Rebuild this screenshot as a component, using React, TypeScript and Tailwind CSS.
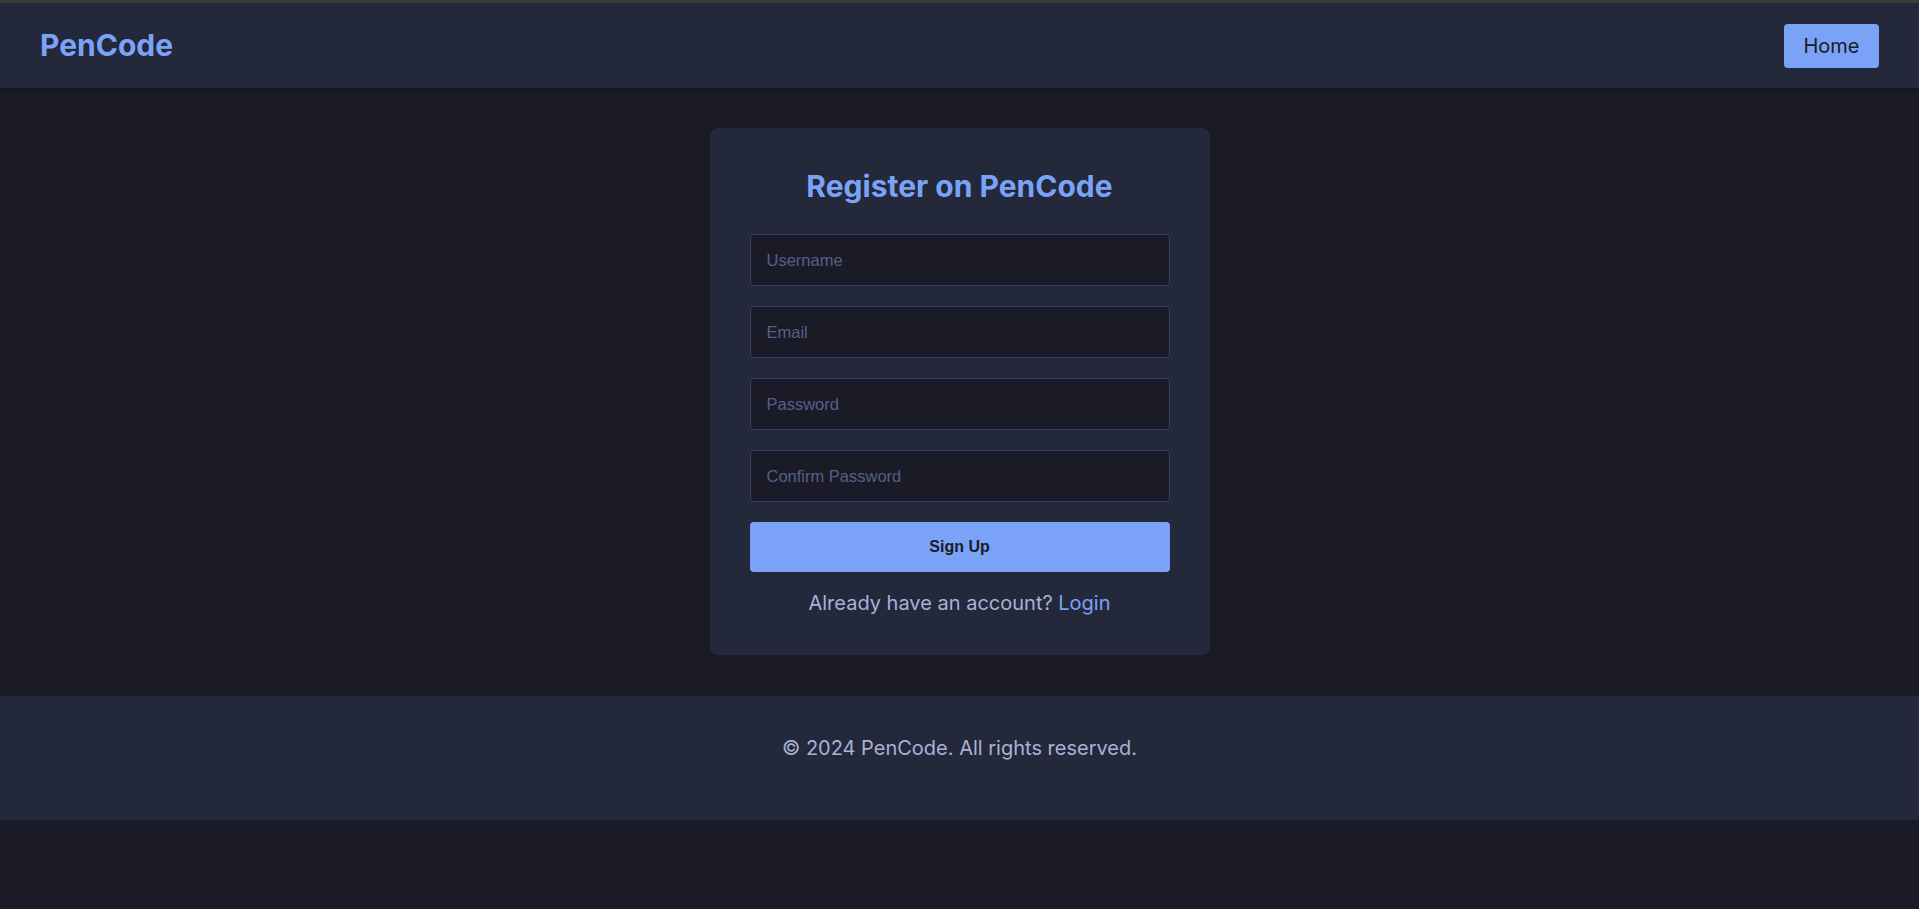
export default function App() {
  const fields = [
    { placeholder: "Username", type: "text" },
    { placeholder: "Email", type: "email" },
    { placeholder: "Password", type: "password" },
    { placeholder: "Confirm Password", type: "password" },
  ];

  return (
    <div className="min-h-[909px] bg-[#1a1b26] font-['Inter',sans-serif] text-[#a9b1d6]">
      <div className="h-[3px] bg-[#3c3c3c]" />
      <header className="flex h-[85px] items-center justify-between bg-[#24283b] px-10 shadow-[0_2px_4px_rgba(0,0,0,0.2)]">
        <h1 className="text-[30px] font-bold text-[#7aa2f7]">PenCode</h1>
        <button className="h-[44px] w-[95px] rounded bg-[#7aa2f7] text-[20px] text-[#1a1b26]">
          Home
        </button>
      </header>

      <main className="flex justify-center pt-10 pb-[41px]">
        <div className="w-[500px] rounded-lg bg-[#24283b] p-10">
          <h2 className="mb-[30px] text-center text-[30px] leading-[36px] font-bold text-[#7aa2f7]">
            Register on PenCode
          </h2>
          <form className="flex flex-col gap-5" onSubmit={(e) => e.preventDefault()}>
            {fields.map((f) => (
              <input
                key={f.placeholder}
                type={f.type}
                placeholder={f.placeholder}
                className="h-[52px] w-full rounded border border-[#3b4261] bg-[#1a1b26] px-4 font-['Liberation_Sans',Arial,sans-serif] text-[16.5px] text-[#c0caf5] placeholder:text-[#565f89] outline-none"
              />
            ))}
            <button
              type="submit"
              className="h-[50px] w-full rounded bg-[#7aa2f7] font-['Liberation_Sans',Arial,sans-serif] text-[16px] font-bold text-[#1a1b26]"
            >
              Sign Up
            </button>
          </form>
          <p className="mt-[19px] text-center text-[20px] leading-[24px]">
            Already have an account? <a className="text-[#7aa2f7]">Login</a>
          </p>
        </div>
      </main>

      <footer className="bg-[#24283b] pt-[37px] pb-[57px] text-center text-[20px] leading-[30px]">
        © 2024 PenCode. All rights reserved.
      </footer>
    </div>
  );
}
